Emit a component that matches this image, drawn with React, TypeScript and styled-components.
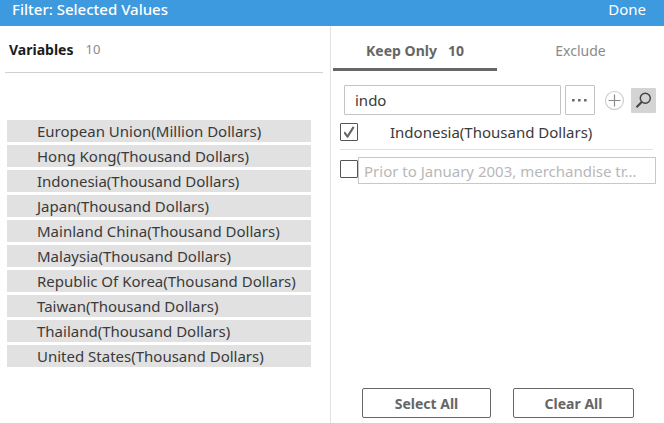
import React, { useState } from "react";
import styled, { createGlobalStyle } from "styled-components";

const GlobalStyle = createGlobalStyle`
  *, *::before, *::after { box-sizing: border-box; }
  body {
    margin: 0;
    background: #fff;
    color: #3a3a3a;
    font-family: "Noto Sans", "Open Sans", sans-serif;
    font-size: 15px;
  }
  button, input { font: inherit; color: inherit; margin: 0; }
`;

const Page = styled.div`
  display: flex;
  flex-direction: column;
  min-height: 100vh;
`;

const TitleBar = styled.header`
  display: flex;
  justify-content: space-between;
  align-items: flex-start;
  height: 26px;
  padding: 0 18px 0 12px;
  background: #3d9adf;
  color: #fff;
  line-height: 18px;
`;

const Title = styled.h1`
  margin: 0;
  font-size: 15px;
  font-weight: 500;
`;

const DoneButton = styled.button`
  padding: 0;
  border: 0;
  background: none;
  font-weight: 400;
  line-height: 18px;
`;

const Panels = styled.main`
  flex: 1;
  display: grid;
  grid-template-columns: 331fr 333fr;
`;

const VariablesPanel = styled.section`
  min-width: 0;
  padding: 0 7px 0 5px;
  border-right: 1px solid #e2e2e2;
`;

const VariablesHeader = styled.div`
  display: flex;
  align-items: center;
  gap: 12px;
  height: 47px;
  padding-left: 4px;
  border-bottom: 1px solid #d0d0d0;
`;

const VariablesTitle = styled.h2`
  margin: 0;
  color: #1c1c1c;
  font-size: 14px;
  font-weight: 700;
`;

const Count = styled.span`
  color: #8a8a8a;
  font-size: 13px;
`;

const ValueList = styled.ul`
  display: grid;
  gap: 3px;
  margin: 47px 12px 0 2px;
  padding: 0;
  list-style: none;
`;

const ValueItem = styled.li`
  height: 22px;
  padding-left: 30px;
  background: #e1e1e1;
  line-height: 22px;
  white-space: nowrap;
`;

const ChoicePanel = styled.section`
  display: flex;
  flex-direction: column;
  min-width: 0;
`;

const Tabs = styled.div`
  display: grid;
  grid-template-columns: 164fr 167fr;
  margin-left: 2px;
`;

const Tab = styled.button<{ $active?: boolean }>`
  display: flex;
  align-items: center;
  justify-content: center;
  gap: 11px;
  height: 45px;
  padding: 6px 0 0;
  border: 0;
  border-bottom: 3px solid ${(p) => (p.$active ? "#666" : "transparent")};
  background: none;
  color: ${(p) => (p.$active ? "#666" : "#8a8a8a")};
  font-size: 14px;
  font-weight: ${(p) => (p.$active ? 700 : 400)};
`;

const SearchRow = styled.form`
  display: flex;
  align-items: center;
  margin: 14px 8px 0 13px;
`;

const SearchInput = styled.input`
  flex: 1;
  min-width: 0;
  height: 30px;
  padding: 0 10px;
  border: 1px solid #c4c4c4;
  border-radius: 1px;
  outline: 0;
`;

const IconButton = styled.button`
  display: grid;
  place-items: center;
  width: 20px;
  height: 20px;
  margin-left: 10px;
  padding: 0;
  border: 0;
  background: none;
`;

const MoreButton = styled(IconButton)`
  width: 30px;
  height: 30px;
  margin-left: 4px;
  border: 1px solid #c4c4c4;
  border-radius: 1px;
`;

const SearchButton = styled(IconButton)`
  width: 25px;
  height: 25px;
  margin-left: 6px;
  border-radius: 1px;
  background: #d4d4d4;
`;

const Results = styled.div`
  margin: 0 8px 0 9px;
`;

const ResultRow = styled.label`
  display: flex;
  align-items: center;
  height: 35px;
  margin-right: 3px;
  border-bottom: 1px solid #e0e0e0;
`;

const Tick = styled.input.attrs({ type: "checkbox" })`
  appearance: none;
  flex: none;
  display: grid;
  place-items: center;
  width: 18px;
  height: 18px;
  border: 1px solid #555;
  border-radius: 1px;
  background: #fff;

  &:checked::after {
    content: "";
    width: 11px;
    height: 12px;
    background: #666;
    clip-path: polygon(0 58%, 14% 46%, 36% 72%, 84% 2%, 100% 12%, 42% 98%, 32% 98%);
  }
`;

const NoteRow = styled.div`
  display: flex;
  align-items: flex-start;
  margin-top: 7px;

  ${Tick} { margin-top: 3px; }
`;

const ResultText = styled.span`
  padding-left: 32px;
  white-space: nowrap;
`;

const NoteInput = styled.input`
  flex: 1;
  min-width: 0;
  height: 27px;
  padding: 0 5px;
  border: 1px solid #c8c8c8;
  outline: 0;
  text-overflow: ellipsis;

  &::placeholder { color: #b8b8b8; opacity: 1; }
`;

const Actions = styled.footer`
  display: grid;
  grid-template-columns: 129fr 121fr;
  gap: 22px;
  margin: auto 30px 5px 31px;
`;

const ActionButton = styled.button`
  height: 30px;
  padding: 0;
  border: 1px solid #666;
  border-radius: 2px;
  background: #fff;
  color: #666;
  font-size: 14px;
  font-weight: 700;
`;

const values = [
  "European Union(Million Dollars)",
  "Hong Kong(Thousand Dollars)",
  "Indonesia(Thousand Dollars)",
  "Japan(Thousand Dollars)",
  "Mainland China(Thousand Dollars)",
  "Malaysia(Thousand Dollars)",
  "Republic Of Korea(Thousand Dollars)",
  "Taiwan(Thousand Dollars)",
  "Thailand(Thousand Dollars)",
  "United States(Thousand Dollars)",
];

const MoreIcon = () => (
  <svg width="18" height="4" viewBox="0 0 18 4" fill="#666" aria-hidden="true">
    <rect x="1" y="1" width="2.6" height="2.6" rx="0.6" />
    <rect x="7" y="1" width="2.6" height="2.6" rx="0.6" />
    <rect x="13" y="1" width="2.6" height="2.6" rx="0.6" />
  </svg>
);

const AddIcon = () => (
  <svg width="20" height="20" viewBox="0 0 20 20" fill="none" aria-hidden="true">
    <circle cx="9.5" cy="10.5" r="9" stroke="#ccc" strokeWidth="1.1" />
    <path d="M9.5 4.5v12M3.5 10.5h12" stroke="#8a8a8a" strokeWidth="1.2" />
  </svg>
);

const SearchIcon = () => (
  <svg width="25" height="25" viewBox="0 0 25 25" fill="none" stroke="#444" aria-hidden="true">
    <circle cx="14.3" cy="10.3" r="5" strokeWidth="1.5" />
    <path d="M10.7 14L5.5 19.2" strokeWidth="2" />
  </svg>
);

export default function App() {
  const [query, setQuery] = useState("indo");
  const [tab, setTab] = useState("keep");

  return (
    <>
      <GlobalStyle />
      <Page>
        <TitleBar>
          <Title>Filter: Selected Values</Title>
          <DoneButton type="button">Done</DoneButton>
        </TitleBar>
        <Panels>
          <VariablesPanel>
            <VariablesHeader>
              <VariablesTitle>Variables</VariablesTitle>
              <Count>10</Count>
            </VariablesHeader>
            <ValueList>
              {values.map((value) => (
                <ValueItem key={value}>{value}</ValueItem>
              ))}
            </ValueList>
          </VariablesPanel>
          <ChoicePanel>
            <Tabs role="tablist">
              <Tab type="button" role="tab" aria-selected={tab === "keep"} $active={tab === "keep"} onClick={() => setTab("keep")}>
                <span>Keep Only</span>
                <span>10</span>
              </Tab>
              <Tab type="button" role="tab" aria-selected={tab === "exclude"} $active={tab === "exclude"} onClick={() => setTab("exclude")}>
                Exclude
              </Tab>
            </Tabs>
            <SearchRow onSubmit={(e) => e.preventDefault()}>
              <SearchInput aria-label="Search values" value={query} onChange={(e) => setQuery(e.target.value)} />
              <MoreButton type="button" aria-label="More options"><MoreIcon /></MoreButton>
              <IconButton type="button" aria-label="Add value"><AddIcon /></IconButton>
              <SearchButton type="submit" aria-label="Search"><SearchIcon /></SearchButton>
            </SearchRow>
            <Results>
              <ResultRow>
                <Tick defaultChecked />
                <ResultText>Indonesia(Thousand Dollars)</ResultText>
              </ResultRow>
              <NoteRow>
                <Tick aria-label="Include note" />
                <NoteInput aria-label="Note" placeholder="Prior to January 2003, merchandise tr..." />
              </NoteRow>
            </Results>
            <Actions>
              <ActionButton type="button">Select All</ActionButton>
              <ActionButton type="button">Clear All</ActionButton>
            </Actions>
          </ChoicePanel>
        </Panels>
      </Page>
    </>
  );
}
